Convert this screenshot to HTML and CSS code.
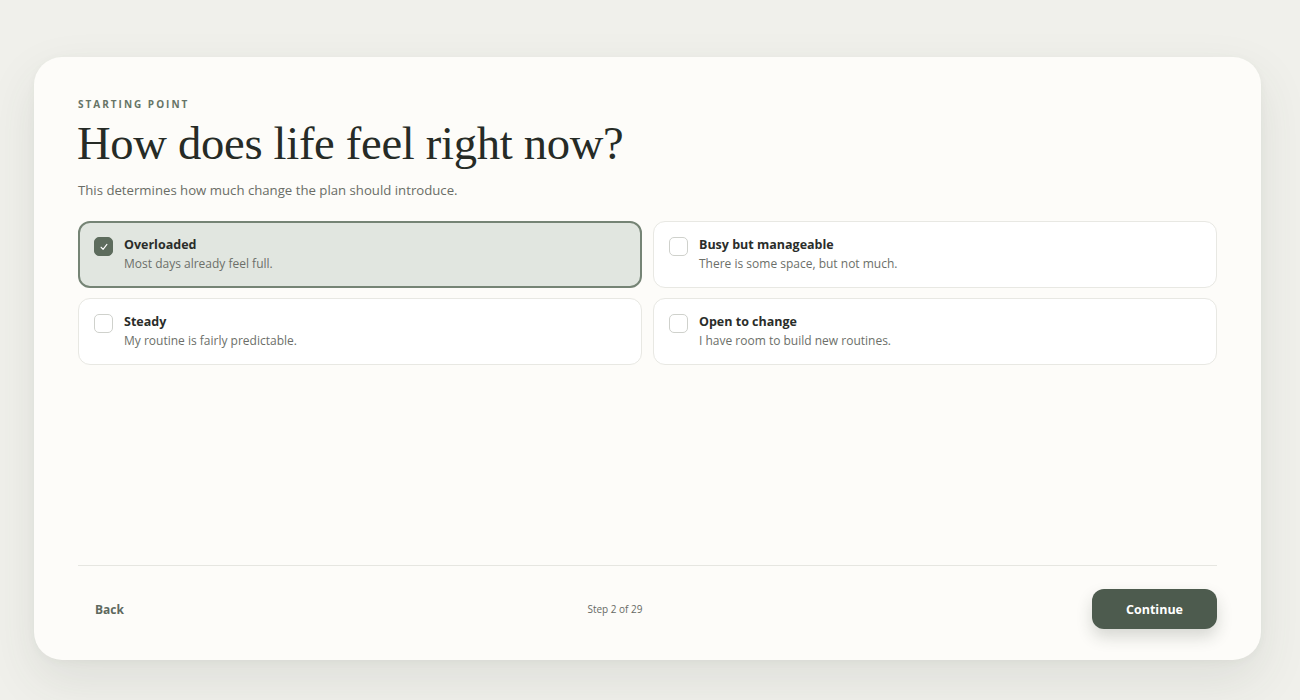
FILE: index.html
```html
<!DOCTYPE html>
<html lang="en">
<head>
<meta charset="utf-8">
<title>Starting point</title>
<link rel="stylesheet" href="styles.css">
</head>
<body>
<main class="card">
  <section class="content">
    <div class="eyebrow">STARTING POINT</div>
    <h1 class="title">How does life feel right now?</h1>
    <p class="subtitle">This determines how much change the plan should introduce.</p>
    <div class="options">
      <label class="option selected">
        <span class="check"><svg viewBox="0 0 12 12" width="10" height="10"><path d="M2.5 6.3 L4.9 8.8 L9.5 2.8" fill="none" stroke="#fff" stroke-width="1.3" stroke-linecap="round" stroke-linejoin="round"/></svg></span>
        <span class="text"><span class="opt-title">Overloaded</span><span class="opt-desc">Most days already feel full.</span></span>
      </label>
      <label class="option">
        <span class="check"></span>
        <span class="text"><span class="opt-title">Busy but manageable</span><span class="opt-desc">There is some space, but not much.</span></span>
      </label>
      <label class="option">
        <span class="check"></span>
        <span class="text"><span class="opt-title">Steady</span><span class="opt-desc">My routine is fairly predictable.</span></span>
      </label>
      <label class="option">
        <span class="check"></span>
        <span class="text"><span class="opt-title">Open to change</span><span class="opt-desc">I have room to build new routines.</span></span>
      </label>
    </div>
  </section>
  <footer class="footer">
    <button class="back">Back</button>
    <span class="step">Step 2 of 29</span>
    <button class="continue">Continue</button>
  </footer>
</main>
</body>
</html>
```
FILE: styles.css
```css
html, body {
  margin: 0;
  padding: 0;
}
body {
  background: #f0f0eb;
  font-family: "Open Sans", "Noto Sans", sans-serif;
  color: #2b2f2b;
  width: 1300px;
  height: 700px;
  overflow: hidden;
}
.card {
  box-sizing: border-box;
  margin: 57px 0 0 34px;
  width: 1227px;
  height: 603px;
  background: #fdfcf9;
  border-radius: 28px;
  box-shadow: 0 20px 50px rgba(60, 70, 55, 0.10), 0 2px 8px rgba(60, 70, 55, 0.04);
  padding: 41px 44px 0 44px;
  display: flex;
  flex-direction: column;
}
.content {
  flex: 1;
}
.eyebrow {
  font-size: 10px;
  font-weight: 700;
  letter-spacing: 2px;
  color: #667466;
  line-height: 12px;
}
.title {
  margin: 6px 0 0 -1px;
  font-family: "Liberation Serif", "DejaVu Serif", serif;
  font-weight: 400;
  font-size: 46.6px;
  line-height: 54px;
  color: #262b26;
  letter-spacing: -0.3px;
}
.subtitle {
  margin: 10px 0 0 0;
  font-size: 13.2px;
  line-height: 20px;
  color: #6a6d66;
}
.options {
  margin-top: 21px;
  display: grid;
  grid-template-columns: 1fr 1fr;
  gap: 10px 11px;
}
.option {
  box-sizing: border-box;
  height: 67px;
  display: flex;
  align-items: flex-start;
  gap: 11px;
  padding: 14px 15px;
  background: #ffffff;
  border: 1px solid #e8e8e3;
  border-radius: 12px;
}
.option.selected {
  background: #e1e6e0;
  border: 2px solid #758475;
  padding: 13px 14px;
}
.check {
  box-sizing: border-box;
  flex: none;
  width: 19px;
  height: 19px;
  margin-top: 1px;
  border: 1px solid #cfd1cc;
  border-radius: 5px;
  background: #fff;
  display: flex;
  align-items: center;
  justify-content: center;
}
.selected .check {
  background: #5d6c5d;
  border-color: #5d6c5d;
}
.text {
  display: flex;
  flex-direction: column;
}
.opt-title {
  font-size: 12.5px;
  font-weight: 700;
  line-height: 18px;
  color: #2a2d2a;
}
.opt-desc {
  font-size: 12px;
  line-height: 18px;
  color: #6c6f69;
  margin-top: 1px;
}
.footer {
  border-top: 1px solid #e6e6e1;
  height: 95px;
  box-sizing: border-box;
  display: flex;
  align-items: flex-start;
  justify-content: space-between;
  padding-top: 23px;
}
.back {
  background: none;
  border: none;
  font-family: inherit;
  font-size: 12px;
  font-weight: 700;
  color: #5e695e;
  padding: 0 0 0 17px;
  height: 40px;
}
.step {
  font-size: 10px;
  color: #666a64;
  margin-left: 14px;
  line-height: 40px;
}
.continue {
  width: 125px;
  height: 40px;
  border: none;
  border-radius: 12px;
  background: #4d5b4e;
  color: #ffffff;
  font-family: inherit;
  font-size: 12.5px;
  font-weight: 700;
  box-shadow: 0 8px 16px rgba(40, 50, 40, 0.18);
}
```
